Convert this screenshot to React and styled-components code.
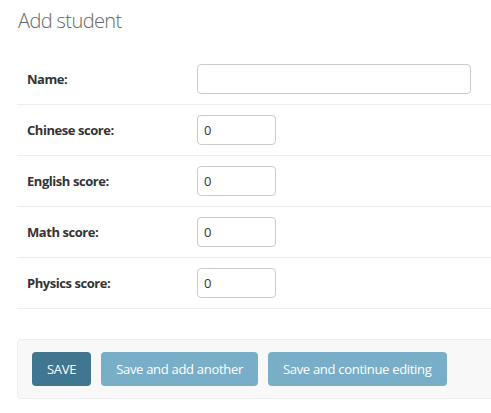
import styled, { createGlobalStyle } from 'styled-components';

const GlobalStyle = createGlobalStyle`
  html, body {
    margin: 0;
    padding: 0;
    background: #fff;
    overflow: hidden;
  }
  body {
    font-family: "Open Sans", "Noto Sans", sans-serif;
    color: #333;
  }
`;

const Page = styled.div`
  padding: 9px 0 0 17px;
  width: calc(100% + 10px);
  box-sizing: border-box;
`;

const Title = styled.h1`
  margin: 0 0 21px 1px;
  font-size: 20px;
  line-height: 24px;
  font-weight: 300;
  letter-spacing: -0.6px;
  color: #666;
`;

const Fieldset = styled.div`
  margin-bottom: 30px;
`;

const Row = styled.div`
  display: flex;
  align-items: center;
  padding: 10px;
  border-bottom: 1px solid #eee;
`;

const Label = styled.label`
  width: 160px;
  padding-right: 10px;
  font-size: 13px;
  font-weight: 700;
  letter-spacing: -0.45px;
  color: #333;
`;

const Input = styled.input`
  box-sizing: border-box;
  width: ${p => (p.$wide ? '274px' : '79px')};
  height: 30px;
  padding: 5px 6px;
  border: 1px solid #ccc;
  border-radius: 4px;
  font-family: inherit;
  font-size: 13px;
  color: #333;
  background: #fff;
  outline: none;
`;

const SubmitRow = styled.div`
  display: flex;
  gap: 10px;
  padding: 12px 14px;
  background: #f8f8f8;
  border: 1px solid #eee;
  border-radius: 4px;
`;

const Button = styled.button`
  height: 34px;
  padding: 0 15px;
  border: none;
  border-radius: 4px;
  background: ${p => (p.$primary ? '#417690' : '#79aec8')};
  color: #fff;
  font-family: inherit;
  font-size: 13px;
  letter-spacing: -0.3px;
  cursor: pointer;
`;

const fields = ['Chinese score', 'English score', 'Math score', 'Physics score'];

export default function App() {
  return (
    <>
      <GlobalStyle />
      <Page>
        <Title>Add student</Title>
        <Fieldset>
          <Row>
            <Label>Name:</Label>
            <Input $wide type="text" defaultValue="" />
          </Row>
          {fields.map(f => (
            <Row key={f}>
              <Label>{f}:</Label>
              <Input type="number" defaultValue="0" />
            </Row>
          ))}
        </Fieldset>
        <SubmitRow>
          <Button $primary>SAVE</Button>
          <Button>Save and add another</Button>
          <Button>Save and continue editing</Button>
        </SubmitRow>
      </Page>
    </>
  );
}
